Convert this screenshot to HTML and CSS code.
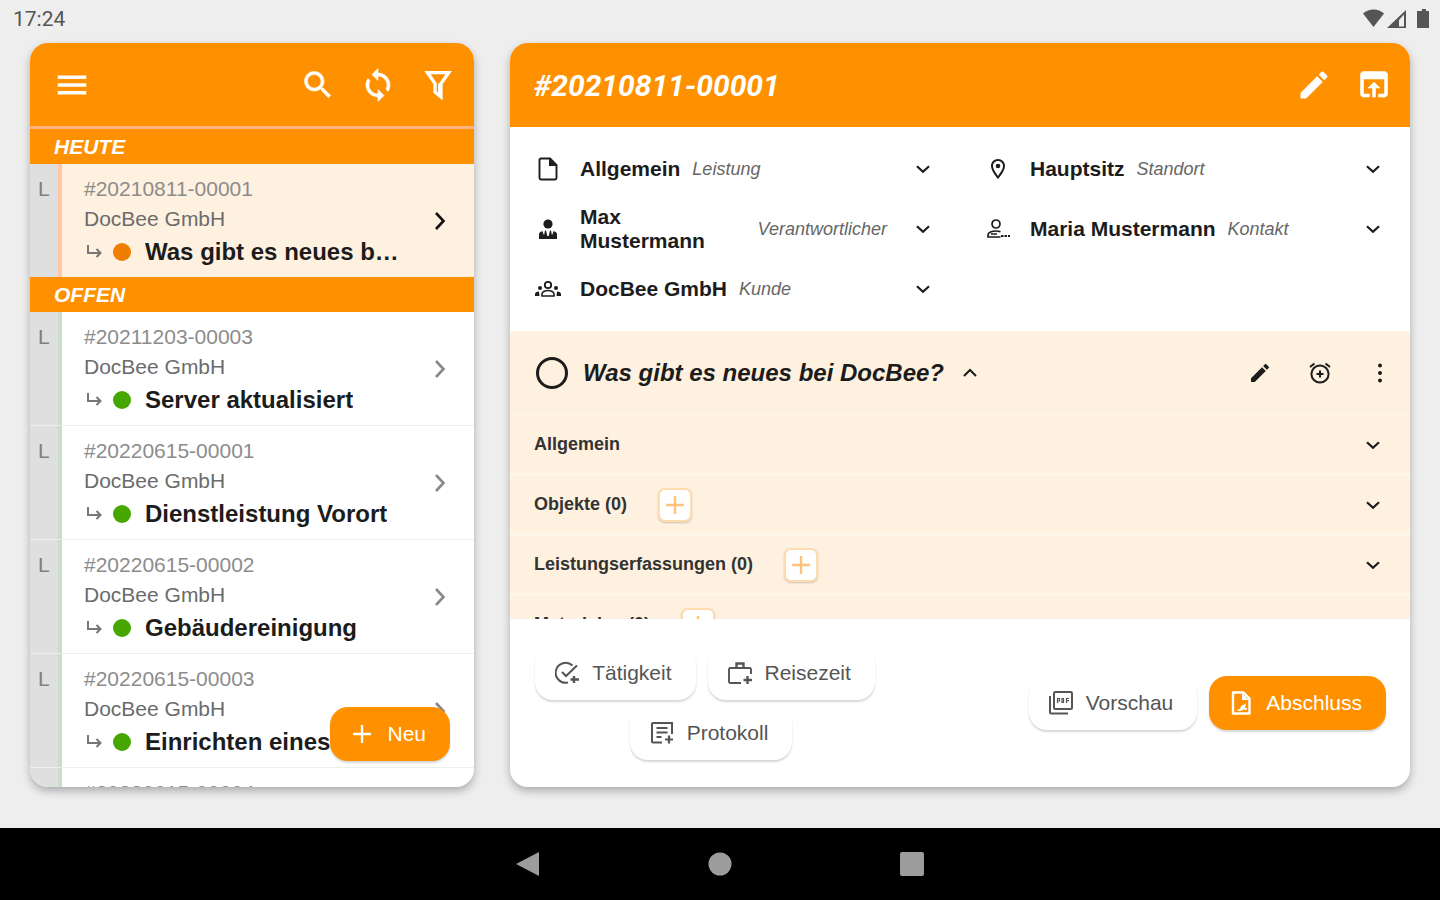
FILE: index.html
```html
<!DOCTYPE html>
<html lang="de">

<head>
    <meta charset="UTF-8">
    <meta name="viewport" content="width=device-width, initial-scale=1.0">
    <title>DocBee</title>
    <link rel="stylesheet" href="styles.css">
</head>

<body>

    <!-- Icons -->
    <svg class="sprite" aria-hidden="true">
        <symbol id="menu" viewBox="0 0 24 24"><path d="M2.500 18.400h19V16h-19v2.400zm0-5.200h19v-2.400h-19v2.400zM2.500 5.600V8h19V5.600h-19z"/></symbol>
        <symbol id="search" viewBox="0 0 24 24"><path d="M15.5 14h-.79l-.28-.27C15.41 12.59 16 11.11 16 9.5 16 5.91 13.09 3 9.5 3S3 5.91 3 9.5 5.91 16 9.5 16c1.61 0 3.09-.59 4.23-1.57l.27.28v.79l5 4.99L20.49 19l-4.99-5zm-6 0C7.01 14 5 11.99 5 9.5S7.01 5 9.5 5 14 7.01 14 9.5 11.99 14 9.5 14z" stroke="currentColor" stroke-width=".4"/></symbol>
        <symbol id="sync" viewBox="0 0 24 24"><path d="M12 4V1L8 5l4 4V6c3.31 0 6 2.69 6 6 0 1.01-.25 1.97-.7 2.8l1.46 1.46C19.54 15.03 20 13.57 20 12c0-4.42-3.58-8-8-8zm0 14c-3.31 0-6-2.69-6-6 0-1.01.25-1.97.7-2.8L5.24 7.74C4.46 8.97 4 10.43 4 12c0 4.42 3.58 8 8 8v3l4-4-4-4v3z" stroke="currentColor" stroke-width=".4"/></symbol>
        <symbol id="filter" viewBox="0 0 24 24"><path d="M5 3.7h14.2L14 11v9l-4-3.4V11z" fill="none" stroke="currentColor" stroke-width="2.2"/><path d="M12 11h2v9l-2-1.6z"/></symbol>
        <symbol id="edit" viewBox="0 0 24 24"><path d="M3 17.25V21h3.75L17.81 9.94l-3.75-3.75L3 17.25zM20.71 7.04c.39-.39.39-1.02 0-1.41l-2.34-2.34c-.39-.39-1.02-.39-1.41 0l-1.83 1.83 3.75 3.75 1.83-1.83z"/></symbol>
        <symbol id="open" viewBox="0 0 24 24"><path d="M19 3H5c-1.11 0-2 .9-2 2v13c0 1.1.89 2 2 2h4v-2H5V8h14v10h-4v2h4c1.1 0 2-.9 2-2V5c0-1.1-.89-2-2-2zm-7 7l-4 4h3v6h2v-6h3l-4-4z" stroke="currentColor" stroke-width=".4"/></symbol>
        <symbol id="right" viewBox="0 0 24 24"><path d="M8 4l7.500 8L8 20" fill="none" stroke="currentColor" stroke-width="2.6"/></symbol>
        <symbol id="down" viewBox="0 0 24 24"><path d="M6 9.2l6 5.6 6-5.6" fill="none" stroke="currentColor" stroke-width="2.2"/></symbol>
        <symbol id="up" viewBox="0 0 24 24"><path d="M6 15l6-6 6 6" fill="none" stroke="currentColor" stroke-width="2"/></symbol>
        <symbol id="sub" viewBox="0 0 18 18"><path d="M2 2v8h12M10.5 6l4 4-4 4" fill="none" stroke="currentColor" stroke-width="2"/></symbol>
        <symbol id="plus" viewBox="0 0 24 24"><path d="M12 3v18M3 12h18" fill="none" stroke="currentColor" stroke-width="2.4"/></symbol>
        <symbol id="file" viewBox="0 0 24 24"><path d="M3.500 3c0-.8.6-1.500 1.500-1.500H14l6.500 6.500V21c0 .8-.7 1.500-1.500 1.500H5c-.9 0-1.500-.7-1.500-1.500z" fill="none" stroke="currentColor" stroke-width="1.900"/><path d="M13 1.500V9h7.500z"/></symbol>
        <symbol id="person" viewBox="0 0 24 24"><circle cx="12" cy="7" r="4.600"/><path d="M3 22v-4.500c0-1.800 1.500-3.200 3.500-3.200L8 18.500l1-5h1l1.300 5.500h1.400L14 13.500h1l1 5 1.500-4.200c2 0 3.500 1.400 3.500 3.200V22z"/></symbol>
        <symbol id="groups" viewBox="0 0 28 24"><circle cx="14" cy="8" r="3.200" fill="none" stroke="currentColor" stroke-width="1.800"/><path d="M8 19v-2c0-2 3-3.500 6-3.500s6 1.500 6 3.500v2z" fill="none" stroke="currentColor" stroke-width="1.600"/><circle cx="6" cy="11" r="2"/><circle cx="22" cy="11" r="2"/><path d="M1 19v-2c0-1.500 1.800-2.500 4-2.500L5.500 19zM27 19v-2c0-1.500-1.800-2.500-4-2.500l-.500 4.500z"/></symbol>
        <symbol id="pin" viewBox="0 0 24 24"><path d="M12 2C8.130 2 5 5.130 5 9c0 5.250 7 13 7 13s7-7.750 7-13c0-3.870-3.130-7-7-7zM7 9c0-2.760 2.240-5 5-5s5 2.240 5 5c0 2.880-2.880 7.190-5 9.880C9.920 16.210 7 11.850 7 9z"/><circle cx="12" cy="9" r="2.300"/></symbol>
        <symbol id="contact" viewBox="0 0 24 24"><circle cx="10" cy="7" r="4" fill="none" stroke="currentColor" stroke-width="1.700"/><path d="M14.500 20H2v-2c0-2.500 4-4 8-4 1.500 0 3 .2 4.500.800M5 17h6" fill="none" stroke="currentColor" stroke-width="1.700"/><path d="M15 18h2.500v2H15zM18.500 18H21v2h-2.500zM22 18h2v2h-2z"/></symbol>
        <symbol id="alarm" viewBox="0 0 24 24"><circle cx="12" cy="13" r="8.600" fill="none" stroke="currentColor" stroke-width="2"/><path d="M12 9.500v7M8.500 13h7M2 6l4.500-3.500M22 6l-4.500-3.500" fill="none" stroke="currentColor" stroke-width="2"/></symbol>
        <symbol id="dots" viewBox="0 0 24 24"><circle cx="12" cy="4.500" r="2"/><circle cx="12" cy="12" r="2"/><circle cx="12" cy="19.500" r="2"/></symbol>
        <symbol id="task-add" viewBox="0 0 24 24"><path d="M17.500 4.500A10 10 0 1 0 13 21.500" fill="none" stroke="currentColor" stroke-width="2"/><path d="M7 11l4 4L22 4.500" fill="none" stroke="currentColor" stroke-width="2"/><path d="M19 15v7M15.500 18.500H24" fill="none" stroke="currentColor" stroke-width="2.400"/></symbol>
        <symbol id="case-add" viewBox="0 0 24 24"><path d="M13 22H2.500C1.500 22 1 21.300 1 20.500v-12C1 7.700 1.500 7 2.500 7h19c1 0 1.500.7 1.500 1.500V13" fill="none" stroke="currentColor" stroke-width="1.900"/><path d="M8.500 7V2.500h7V7" fill="none" stroke="currentColor" stroke-width="2.400"/><path d="M19.500 15v8M15.500 19H24" fill="none" stroke="currentColor" stroke-width="2.400"/></symbol>
        <symbol id="note-add" viewBox="0 0 24 24"><path d="M12 21.500H3c-.600 0-1-.4-1-1V3c0-.600.4-1 1-1h19v11" fill="none" stroke="currentColor" stroke-width="2"/><path d="M6.500 7h11M6.500 11.500h11M6.500 16h5" fill="none" stroke="currentColor" stroke-width="1.900"/><path d="M19 14.500v8M15 18.500h8" fill="none" stroke="currentColor" stroke-width="2.200"/></symbol>
        <symbol id="preview" viewBox="0 0 24 24"><rect x="5" y="1" width="18" height="17" rx="1.500" fill="none" stroke="currentColor" stroke-width="2"/><path d="M1 5v16c0 .8.5 1.500 1.500 1.500H19" fill="none" stroke="currentColor" stroke-width="2"/><path d="M8.500 12V7.500h2v2.500h-2M13 7.500v4h1.500v-4zM17.500 12V7.500h2.500M17.500 9.700H20" fill="none" stroke="currentColor" stroke-width="1.200"/></symbol>
        <symbol id="sign" viewBox="0 0 24 24"><path d="M4 1.500h10.500l6 6v15H4z" fill="none" stroke="currentColor" stroke-width="2.400" stroke-linejoin="round"/><path d="M13 2v7h7zM8.500 18.500c3 1 2.500-3 4.500-4l4-2-1 4.500h2v1.800h-4c-1 1-3 1.500-5.500 1z"/></symbol>
    </svg>

    <div class="status-bar">
        <span>17:24</span>
        <svg class="status-icons" viewBox="0 0 66 20" fill="#555">
            <path d="M0 4.500C6-1 15-1 21 4.500L10.500 18z"/>
            <path d="M24 19L43 1v18zM36 11v6.500h5V5.500z" fill-rule="evenodd"/>
            <path d="M56 2h3V0h4v2h3v17H54V2z"/>
        </svg>
    </div>

    <main class="content">
        <div class="list-column">
            <section class="card">
                <header class="card-header list-header">
                    <button class="icon-btn" aria-label="Menü"><svg><use href="#menu"/></svg></button>
                    <div class="actions">
                        <button class="icon-btn" aria-label="Suche"><svg><use href="#search"/></svg></button>
                        <button class="icon-btn" aria-label="Aktualisieren"><svg><use href="#sync"/></svg></button>
                        <button class="icon-btn" aria-label="Filter"><svg><use href="#filter"/></svg></button>
                    </div>
                </header>
                <div class="list">
                    <h2>HEUTE</h2>
                    <ul>
                        <li class="item active">
                            <span class="type">L</span>
                            <div class="info">
                                <p class="number">#20210811-00001</p>
                                <p class="customer">DocBee GmbH</p>
                                <p class="task"><svg><use href="#sub"/></svg><i class="dot"></i><span>Was gibt es neues bei DocBee?</span></p>
                            </div>
                            <svg class="arrow"><use href="#right"/></svg>
                        </li>
                    </ul>
                    <h2>OFFEN</h2>
                    <ul>
                        <li class="item">
                            <span class="type">L</span>
                            <div class="info">
                                <p class="number">#20211203-00003</p>
                                <p class="customer">DocBee GmbH</p>
                                <p class="task"><svg><use href="#sub"/></svg><i class="dot"></i><span>Server aktualisiert</span></p>
                            </div>
                            <svg class="arrow"><use href="#right"/></svg>
                        </li>
                        <li class="item">
                            <span class="type">L</span>
                            <div class="info">
                                <p class="number">#20220615-00001</p>
                                <p class="customer">DocBee GmbH</p>
                                <p class="task"><svg><use href="#sub"/></svg><i class="dot"></i><span>Dienstleistung Vorort</span></p>
                            </div>
                            <svg class="arrow"><use href="#right"/></svg>
                        </li>
                        <li class="item">
                            <span class="type">L</span>
                            <div class="info">
                                <p class="number">#20220615-00002</p>
                                <p class="customer">DocBee GmbH</p>
                                <p class="task"><svg><use href="#sub"/></svg><i class="dot"></i><span>Gebäudereinigung</span></p>
                            </div>
                            <svg class="arrow"><use href="#right"/></svg>
                        </li>
                        <li class="item">
                            <span class="type">L</span>
                            <div class="info">
                                <p class="number">#20220615-00003</p>
                                <p class="customer">DocBee GmbH</p>
                                <p class="task"><svg><use href="#sub"/></svg><i class="dot"></i><span>Einrichten eines PCs</span></p>
                            </div>
                            <svg class="arrow"><use href="#right"/></svg>
                        </li>
                        <li class="item">
                            <span class="type"></span>
                            <div class="info">
                                <p class="number">#20220615-00004</p>
                            </div>
                        </li>
                    </ul>
                </div>
                <button class="btn primary new-btn"><svg><use href="#plus"/></svg>Neu</button>
            </section>
        </div>

        <div class="detail-column">
            <section class="card">
                <header class="card-header detail-header">
                    <h1>#20210811-00001</h1>
                    <div class="actions">
                        <button class="icon-btn" aria-label="Bearbeiten"><svg><use href="#edit"/></svg></button>
                        <button class="icon-btn" aria-label="Öffnen"><svg><use href="#open"/></svg></button>
                    </div>
                </header>

                <div class="fields">
                    <div class="field">
                        <svg class="field-icon"><use href="#file"/></svg>
                        <p class="field-text"><b>Allgemein</b><em>Leistung</em></p>
                        <button class="toggle" aria-label="Leistung"><svg><use href="#down"/></svg></button>
                    </div>
                    <div class="field">
                        <svg class="field-icon"><use href="#pin"/></svg>
                        <p class="field-text"><b>Hauptsitz</b><em>Standort</em></p>
                        <button class="toggle" aria-label="Standort"><svg><use href="#down"/></svg></button>
                    </div>
                    <div class="field">
                        <svg class="field-icon"><use href="#person"/></svg>
                        <p class="field-text"><b>Max Mustermann</b><em>Verantwortlicher</em></p>
                        <button class="toggle" aria-label="Verantwortlicher"><svg><use href="#down"/></svg></button>
                    </div>
                    <div class="field">
                        <svg class="field-icon"><use href="#contact"/></svg>
                        <p class="field-text"><b>Maria Mustermann</b><em>Kontakt</em></p>
                        <button class="toggle" aria-label="Kontakt"><svg><use href="#down"/></svg></button>
                    </div>
                    <div class="field">
                        <svg class="field-icon"><use href="#groups"/></svg>
                        <p class="field-text"><b>DocBee GmbH</b><em>Kunde</em></p>
                        <button class="toggle" aria-label="Kunde"><svg><use href="#down"/></svg></button>
                    </div>
                </div>

                <div class="sections">
                    <div class="task-header">
                        <input type="radio" aria-label="Was gibt es neues bei DocBee?">
                        <h2>Was gibt es neues bei DocBee?</h2>
                        <button class="toggle" aria-label="Einklappen"><svg><use href="#up"/></svg></button>
                        <div class="task-actions">
                            <button class="toggle" aria-label="Bearbeiten"><svg><use href="#edit"/></svg></button>
                            <button class="toggle" aria-label="Erinnerung"><svg><use href="#alarm"/></svg></button>
                            <button class="toggle" aria-label="Mehr"><svg><use href="#dots"/></svg></button>
                        </div>
                    </div>
                    <div class="section">
                        <h3>Allgemein</h3>
                        <button class="toggle" aria-label="Allgemein"><svg><use href="#down"/></svg></button>
                    </div>
                    <div class="section">
                        <h3>Objekte (0)</h3>
                        <button class="add" aria-label="Objekt hinzufügen"><svg><use href="#plus"/></svg></button>
                        <button class="toggle" aria-label="Objekte"><svg><use href="#down"/></svg></button>
                    </div>
                    <div class="section">
                        <h3>Leistungserfassungen (0)</h3>
                        <button class="add" aria-label="Leistungserfassung hinzufügen"><svg><use href="#plus"/></svg></button>
                        <button class="toggle" aria-label="Leistungserfassungen"><svg><use href="#down"/></svg></button>
                    </div>
                    <div class="section">
                        <h3>Materialen (0)</h3>
                        <button class="add" aria-label="Material hinzufügen"><svg><use href="#plus"/></svg></button>
                        <button class="toggle" aria-label="Materialen"><svg><use href="#down"/></svg></button>
                    </div>
                </div>

                <footer class="card-footer">
                    <div class="create-buttons">
                        <button class="btn"><svg><use href="#task-add"/></svg>Tätigkeit</button>
                        <button class="btn"><svg><use href="#case-add"/></svg>Reisezeit</button>
                        <button class="btn"><svg><use href="#note-add"/></svg>Protokoll</button>
                    </div>
                    <div class="finish-buttons">
                        <button class="btn"><svg><use href="#preview"/></svg>Vorschau</button>
                        <button class="btn primary"><svg><use href="#sign"/></svg>Abschluss</button>
                    </div>
                </footer>
            </section>
        </div>
    </main>

    <nav class="nav-bar">
        <button aria-label="Zurück"><svg viewBox="0 0 24 24"><path d="M0 12L23 0v24z"/></svg></button>
        <button aria-label="Home"><svg viewBox="0 0 24 24"><circle cx="12" cy="12" r="11.500"/></svg></button>
        <button aria-label="Übersicht"><svg viewBox="0 0 24 24"><rect width="24" height="24" rx="2"/></svg></button>
    </nav>

</body>

</html>
```

FILE: styles.css
```css
* {
    padding: 0;
    margin: 0;
    box-sizing: border-box;
}

body {
    display: flex;
    flex-direction: column;
    height: 100vh;
    overflow: hidden;
    background-color: #eee;
    color: #1c1c1c;
    font-family: "Liberation Sans", Arial, sans-serif;
    font-size: 21px;
}

ul {
    list-style: none;
}

button {
    border: none;
    background: none;
    color: inherit;
    font: inherit;
    cursor: pointer;
}

svg {
    display: block;
    flex-shrink: 0;
    width: 24px;
    height: 24px;
    fill: currentColor;
}

.sprite {
    position: absolute;
    width: 0;
    height: 0;
}

/* Status bar */
.status-bar {
    display: flex;
    justify-content: space-between;
    align-items: center;
    height: 43px;
    padding: 0 11px 5px 13px;
    color: #555;
    font-family: Roboto, sans-serif;
}

.status-icons {
    width: 66px;
    height: 20px;
}

/* Columns */
.content {
    display: grid;
    grid-template-columns: 1fr 2fr;
    grid-template-rows: minmax(0, 1fr);
    flex: 1;
    min-height: 0;
    padding-bottom: 41px;
}

.list-column {
    min-width: 0;
    padding: 0 6px 0 30px;
}

.detail-column {
    min-width: 0;
    padding: 0 30px;
}

.card {
    display: flex;
    flex-direction: column;
    position: relative;
    height: 100%;
    overflow: hidden;
    border-radius: 18px;
    background-color: #fff;
    box-shadow: 0 4px 8px rgba(0, 0, 0, 0.28);
}

.card-header {
    display: flex;
    justify-content: space-between;
    align-items: center;
    flex-shrink: 0;
    height: 84px;
    padding: 0 18px 0 24px;
    background-color: #ff9100;
    color: #fff;
}

.list-header {
    border-bottom: 1px solid #ffb27d;
}

.card-header svg {
    width: 36px;
    height: 36px;
}

h1 {
    font-family: Roboto, sans-serif;
    font-size: 30px;
    font-style: italic;
    font-weight: bold;
}

.actions {
    display: flex;
    gap: 24px;
}

/* List */
.list {
    flex: 1;
    min-height: 0;
    overflow: hidden;
    border-top: 2px solid #ffb27d;
}

.list h2 {
    height: 35px;
    padding-left: 24px;
    background-color: #ff9100;
    color: #fff;
    font-size: 21px;
    font-style: italic;
    line-height: 35px;
}

.item {
    display: flex;
    align-items: center;
    padding-right: 22px;
    border-bottom: 1px solid #eee;
}

.item:last-child {
    border-bottom: none;
}

.type {
    align-self: stretch;
    width: 32px;
    padding: 10px 0 0 8px;
    border-right: 4px solid #c8e0c6;
    background-color: #dfdfdf;
    color: #808080;
    line-height: 30px;
}

.info {
    flex: 1;
    min-width: 0;
    padding: 10px 28px 7px 22px;
    line-height: 30px;
}

.number {
    color: #8c8c8c;
}

.customer {
    color: #6b6b6b;
}

.task {
    display: flex;
    align-items: center;
    font-size: 24px;
    font-weight: bold;
    line-height: 36px;
}

.task svg {
    width: 18px;
    height: 18px;
    margin: 0 9px 0 2px;
    color: #777;
}

.task span {
    overflow: hidden;
    text-overflow: ellipsis;
    white-space: nowrap;
}

.dot {
    flex-shrink: 0;
    width: 18px;
    height: 18px;
    margin-right: 14px;
    border-radius: 50%;
    background-color: #47a600;
}

.arrow {
    width: 24px;
    color: #888;
}

.active {
    background-color: #fff1df;
}

.active .type {
    border-right-color: #ffc9a8;
}

.active .dot {
    background-color: #ef7d00;
}

.active .arrow {
    color: #111;
}

/* Buttons */
.btn {
    display: flex;
    align-items: center;
    gap: 13px;
    height: 54px;
    padding: 0 24px 0 20px;
    border-radius: 18px;
    background-color: #fff;
    color: #555;
    box-shadow: 0 2px 2px rgba(0, 0, 0, 0.16);
}

.primary {
    background-color: #ff9100;
    color: #fff;
}

.new-btn {
    position: absolute;
    right: 24px;
    bottom: 26px;
}

/* Fields */
.fields {
    display: grid;
    grid-template-columns: 1fr 1fr;
    grid-auto-rows: 60px;
    padding: 12px 0;
}

.field {
    display: flex;
    align-items: center;
    min-width: 0;
    padding: 0 25px 0 24px;
}

.field-icon {
    width: 28px;
    margin-right: 18px;
}

.field-text {
    display: flex;
    align-items: center;
    flex: 1;
    gap: 12px;
    min-width: 0;
    margin-right: 24px;
    line-height: 24px;
}

.field-text em {
    flex-shrink: 0;
    color: #666;
    font-size: 18px;
}

/* Sections */
.sections {
    flex: 1;
    min-height: 0;
    overflow: hidden;
    background-color: #fff1df;
}

.task-header {
    display: flex;
    align-items: center;
    height: 85px;
    padding: 0 18px 0 26px;
    border-bottom: 1px solid #fff6ea;
}

.task-header input {
    appearance: none;
    width: 32px;
    height: 32px;
    border: 3px solid #1c1c1c;
    border-radius: 50%;
}

.task-header h2 {
    margin: 0 14px 0 15px;
    font-size: 24px;
    font-style: italic;
}

.task-actions {
    display: flex;
    gap: 36px;
    margin-left: auto;
}

.section {
    display: flex;
    align-items: center;
    height: 60px;
    padding: 0 25px 0 24px;
    border-bottom: 3px solid #fff6ea;
}

.section h3 {
    color: #333;
    font-size: 18px;
}

.section .toggle {
    margin-left: auto;
}

.add {
    display: flex;
    justify-content: center;
    align-items: center;
    width: 34px;
    height: 34px;
    margin-left: 31px;
    border: 2px solid #ffdcb0;
    border-radius: 7px;
    background-color: #fff;
    color: #ffc27a;
    box-shadow: 0 1px 2px rgba(0, 0, 0, 0.2);
}

/* Footer */
.card-footer {
    display: flex;
    justify-content: space-between;
    align-items: center;
    flex-shrink: 0;
    padding: 27px 24px;
}

.create-buttons {
    display: flex;
    flex-wrap: wrap;
    justify-content: center;
    row-gap: 6px;
    width: 354px;
}

.create-buttons .btn:not(:last-child) {
    margin-right: 12px;
}

.finish-buttons {
    display: flex;
    gap: 12px;
}

/* Navigation bar */
.nav-bar {
    display: flex;
    justify-content: center;
    align-items: center;
    gap: 168px;
    flex-shrink: 0;
    height: 72px;
    background-color: #000;
    color: #9c9c9c;
}
```
